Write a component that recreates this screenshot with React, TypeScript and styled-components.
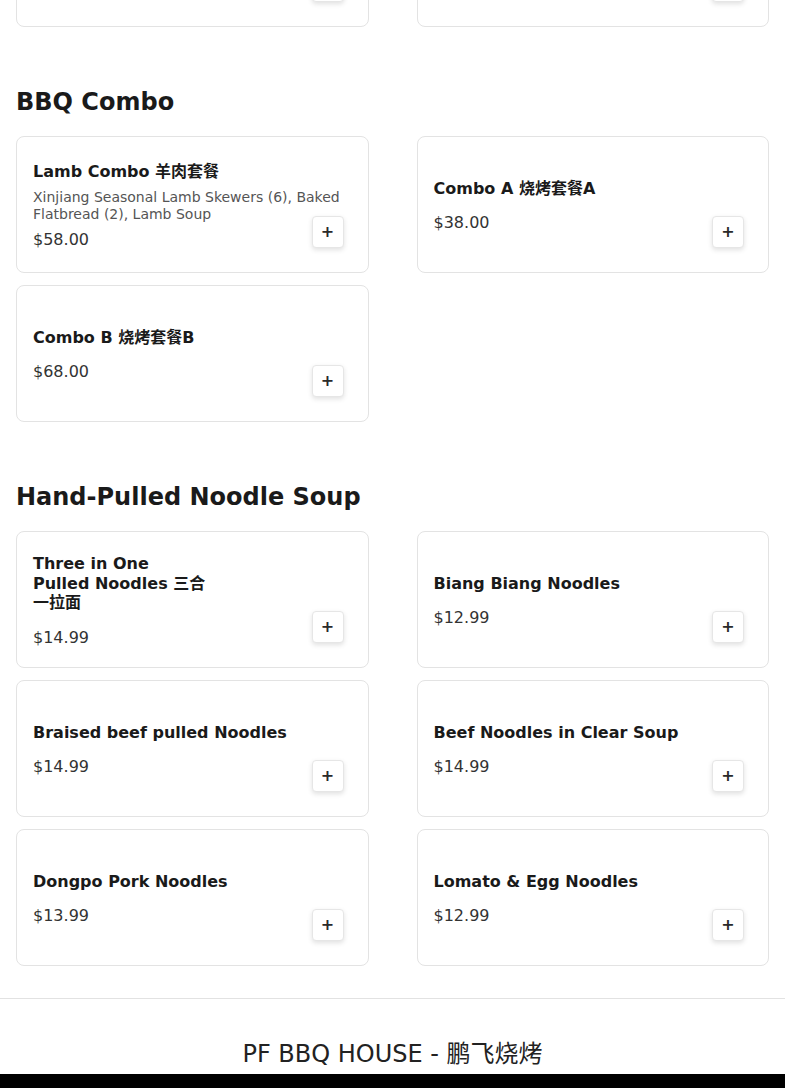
import styled, { createGlobalStyle, css } from 'styled-components';

const GlobalStyle = createGlobalStyle`
  html, body {
    margin: 0;
    padding: 0;
    background: #fff;
  }
  body {
    font-family: "DejaVu Sans", "Noto Sans CJK SC", sans-serif;
    color: #1a1a1a;
  }
`;

const Page = styled.div`
  height: 100vh;
  display: flex;
  flex-direction: column;
  justify-content: flex-end;
  overflow: hidden;
`;

const Menu = styled.main`
  flex-shrink: 0;
  padding: 0 16px;
`;

const Section = styled.section`
  padding-bottom: 32px;
`;

const SectionTitle = styled.h2`
  margin: 29px 0 20px;
  font-size: 24px;
  line-height: 28px;
  font-weight: 700;
  color: #1a1a1a;
`;

const Grid = styled.div`
  display: grid;
  grid-template-columns: 1fr 1fr;
  column-gap: 48px;
  row-gap: 12px;
`;

const Card = styled.div`
  position: relative;
  box-sizing: border-box;
  min-height: 137px;
  padding: 18px 16px 16px;
  border: 1px solid #e3e3e3;
  border-radius: 8px;
  background: #fff;
  display: flex;
  align-items: center;
`;

const Info = styled.div`
  flex: 1;
  min-width: 0;
  display: flex;
  flex-direction: column;
  gap: 7.5px;
`;

const Name = styled.div<{ $maxWidth?: number }>`
  font-size: 16px;
  line-height: 1.2;
  font-weight: 700;
  color: #1a1a1a;
  ${p => p.$maxWidth && css`max-width: ${p.$maxWidth}px; line-height: 19.5px;`}
`;

const Desc = styled.div`
  font-size: 14px;
  line-height: 1.2;
  color: #555;
`;

const Price = styled.div`
  font-size: 16px;
  line-height: 1.2;
  color: #333;
`;

const AddButton = styled.button`
  position: absolute;
  right: 24px;
  bottom: 24px;
  box-sizing: border-box;
  width: 32px;
  height: 32px;
  padding: 0;
  border: 1px solid #e6e6e6;
  border-radius: 4px;
  background: #fff;
  box-shadow: 0 2px 5px rgba(0, 0, 0, 0.12);
  font-family: inherit;
  font-size: 16px;
  font-weight: 700;
  line-height: 1;
  color: #2a2a2a;
  display: flex;
  align-items: center;
  justify-content: center;
  cursor: pointer;
`;

const Footer = styled.footer`
  flex-shrink: 0;
  border-top: 1px solid #e2e2e2;
  padding: 41px 0 6px;
  text-align: center;
  font-size: 24px;
  line-height: 28px;
  color: #222;
`;

const BottomBar = styled.div`
  flex-shrink: 0;
  height: 14px;
  background: #000;
`;

interface Item {
  name: string;
  desc?: string;
  price: string;
  nameWidth?: number;
}

interface MenuSection {
  title: string;
  items: Item[];
}

const sections: MenuSection[] = [
  {
    title: 'Skewers',
    items: [
      { name: 'Lamb Skewers 羊肉串', price: '$2.99' },
      { name: 'Beef Skewers 牛肉串', price: '$2.99' },
    ],
  },
  {
    title: 'BBQ Combo',
    items: [
      {
        name: 'Lamb Combo 羊肉套餐',
        desc: 'Xinjiang Seasonal Lamb Skewers (6), Baked Flatbread (2), Lamb Soup',
        price: '$58.00',
      },
      { name: 'Combo A 烧烤套餐A', price: '$38.00' },
      { name: 'Combo B 烧烤套餐B', price: '$68.00' },
    ],
  },
  {
    title: 'Hand-Pulled Noodle Soup',
    items: [
      { name: 'Three in One Pulled Noodles 三合一拉面', price: '$14.99', nameWidth: 175 },
      { name: 'Biang Biang Noodles', price: '$12.99' },
      { name: 'Braised beef pulled Noodles', price: '$14.99' },
      { name: 'Beef Noodles in Clear Soup', price: '$14.99' },
      { name: 'Dongpo Pork Noodles', price: '$13.99' },
      { name: 'Lomato & Egg Noodles', price: '$12.99' },
    ],
  },
];

function MenuCard({ item }: { item: Item }) {
  return (
    <Card>
      <Info>
        <Name $maxWidth={item.nameWidth}>{item.name}</Name>
        <Desc>{item.desc}</Desc>
        <Price>{item.price}</Price>
      </Info>
      <AddButton aria-label={`Add ${item.name}`}>+</AddButton>
    </Card>
  );
}

export default function App() {
  return (
    <>
      <GlobalStyle />
      <Page>
        <Menu>
          {sections.map(section => (
            <Section key={section.title}>
              <SectionTitle>{section.title}</SectionTitle>
              <Grid>
                {section.items.map(item => (
                  <MenuCard key={item.name} item={item} />
                ))}
              </Grid>
            </Section>
          ))}
        </Menu>
        <Footer>PF BBQ HOUSE - 鹏飞烧烤</Footer>
        <BottomBar />
      </Page>
    </>
  );
}
